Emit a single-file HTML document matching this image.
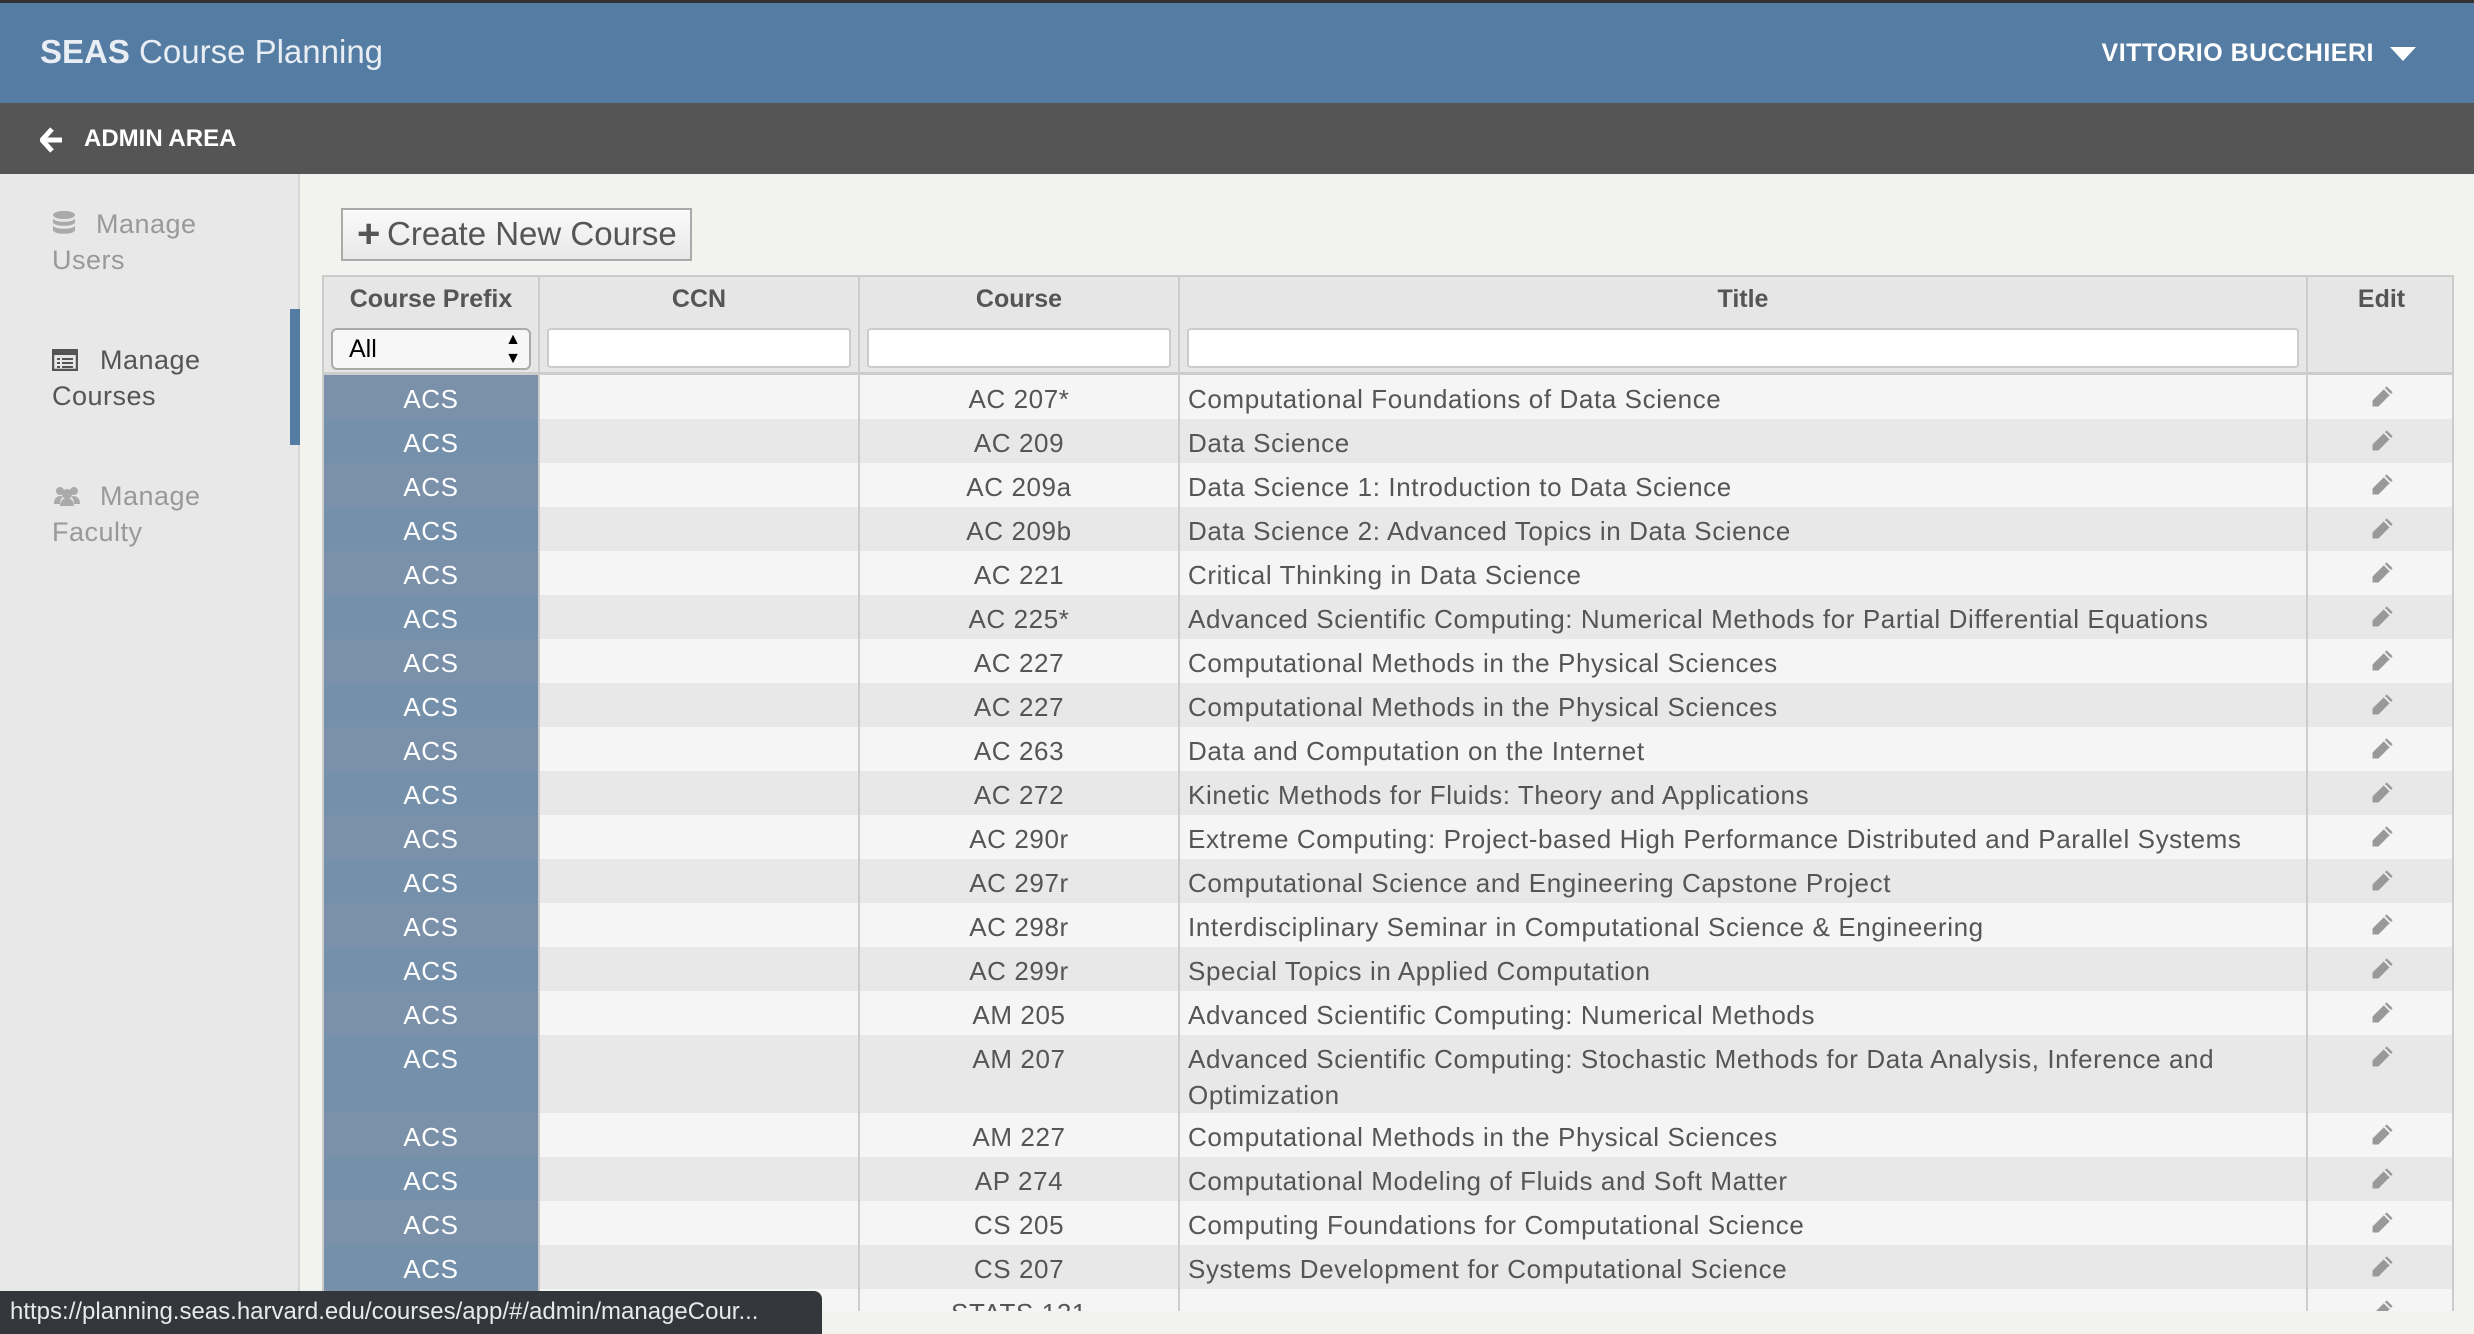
<!DOCTYPE html>
<html><head><meta charset="utf-8"><style>
*{box-sizing:border-box;margin:0;padding:0}
body{width:2474px;height:1334px;overflow:hidden;background:#f2f2ef;font-family:"Liberation Sans",sans-serif;position:relative}
.top{position:absolute;left:0;top:0;width:2474px;height:103px;background:#557ca3;border-top:3px solid #333}
.top .t{position:absolute;left:40px;top:30px;font-size:33px;color:#e8eef4}
.top .u{position:absolute;right:100px;top:36px;font-size:25px;color:#fff;font-weight:bold;letter-spacing:0.5px}
.caret{position:absolute;right:58px;top:44px;width:0;height:0;border-left:13px solid transparent;border-right:13px solid transparent;border-top:14px solid #fff}
.dark{position:absolute;left:0;top:103px;width:2474px;height:71px;background:#555}
.dark span{position:absolute;left:84px;top:22px;color:#fff;font-weight:bold;font-size:24px}
.side{position:absolute;left:0;top:174px;width:300px;height:1160px;background:#e8e8e8;border-right:2px solid #d6d6d6}
.si{position:absolute;left:52px;font-size:27px;line-height:36px;color:#999;letter-spacing:0.5px}
.si.a{color:#555}
.bar{position:absolute;left:290px;top:309px;width:10px;height:136px;background:#557ca3}
.btn{position:absolute;left:341px;top:208px;width:351px;height:53px;border:2px solid #aaa;background:linear-gradient(#fafafa,#e8e8e8);font-size:33px;color:#555;padding-left:44px;line-height:48px}
.btn b{position:absolute;left:14px;top:0;font-size:40px;color:#555}
.tw{position:absolute;left:322px;top:275px;width:2132px;height:1036px;overflow:hidden;border:2px solid #ccc;border-bottom:none}
table{border-collapse:collapse;table-layout:fixed;width:2132px}
th{background:#e6e6e6;height:96px;vertical-align:top;font-size:25px;color:#555;font-weight:bold;padding-top:8px;border-right:2px solid #ccc;border-bottom:3px solid #ccc}
th .in{margin:14px auto 0;width:calc(100% - 14px);height:40px;background:#fff;border:2px solid #ccc;border-radius:4px}
th .sel{margin:14px auto 0;width:calc(100% - 14px);height:42px;background:#f7f7f7;border:2px solid #aaa;border-radius:6px;text-align:left;padding-left:16px;font-weight:normal;color:#000;font-size:25px;line-height:38px;position:relative}
td{height:44px;font-size:26px;letter-spacing:0.6px;color:#555;border-right:2px solid #ccc;vertical-align:top;padding-top:6px;line-height:36px}
td:nth-child(1){background:#7a8fa8;color:#fff;text-align:center}
td:nth-child(3){text-align:center}
td:nth-child(4){padding-left:8px}
td:nth-child(5){text-align:center}
tr.d td{height:78px}
tr:nth-child(odd) td{background:#f5f5f5}
tr:nth-child(even) td{background:#e8e8e8}
tr:nth-child(odd) td:nth-child(1){background:#7b90a9}
tr:nth-child(even) td:nth-child(1){background:#7590aa}
.status{position:absolute;left:0;top:1291px;width:822px;height:43px;background:#33373b;border-radius:0 8px 0 0;color:#e8e8e8;font-size:24px;line-height:42px;padding-left:10px;white-space:nowrap}
</style></head><body>
<div class="top"><div class="t"><b>SEAS</b> Course Planning</div><div class="u">VITTORIO BUCCHIERI</div><div class="caret"></div></div>
<div class="dark"><svg style="position:absolute;left:40px;top:24px" width="24" height="26" viewBox="0 0 24 26"><path d="M12 2 L2 13 L12 24 M3 13 H22" stroke="#fff" stroke-width="5" fill="none" stroke-linejoin="round"/></svg><span>ADMIN AREA</span></div>
<div class="side">
<div class="si" style="top:32px"><svg width="24" height="26" viewBox="0 0 24 26" style="vertical-align:-3px;margin-right:20px"><ellipse cx="12" cy="5" rx="11" ry="4" fill="#aaa"/><path d="M1 8c0 5 22 5 22 0v4c0 5-22 5-22 0zM1 15c0 5 22 5 22 0v5c0 5-22 5-22 0z" fill="#aaa"/></svg>Manage<br>Users</div>
<div class="si a" style="top:168px"><svg width="26" height="22" viewBox="0 0 26 22" style="vertical-align:-2px;margin-right:22px"><rect x="1" y="1" width="24" height="20" fill="none" stroke="#555" stroke-width="2.5"/><rect x="1" y="1" width="24" height="5" fill="#555"/><path d="M5 10h3M10 10h11M5 14h3M10 14h11M5 18h3M10 18h11" stroke="#555" stroke-width="2"/></svg>Manage<br>Courses</div>
<div class="si" style="top:304px"><svg width="30" height="22" viewBox="0 0 30 22" style="vertical-align:-2px;margin-right:18px"><circle cx="8" cy="6" r="4" fill="#aaa"/><circle cx="22" cy="6" r="4" fill="#aaa"/><circle cx="15" cy="9" r="5" fill="#aaa"/><path d="M2 18c0-5 4-7 6-7s3 1 3 1c-3 2-3 5-3 7H2zM28 18c0-5-4-7-6-7s-3 1-3 1c3 2 3 5 3 7h6zM8 21c0-6 4-8 7-8s7 2 7 8z" fill="#aaa"/></svg>Manage<br>Faculty</div>
</div>
<div class="bar"></div>
<div class="btn"><b>+</b>Create New Course</div>
<div class="tw"><table>
<colgroup><col style="width:215px"><col style="width:320px"><col style="width:320px"><col style="width:1128px"><col style="width:149px"></colgroup>
<thead><tr><th>Course Prefix<div class="sel">All<span style="position:absolute;right:8px;top:0;font-size:16px;line-height:19px;color:#000">▲<br>▼</span></div></th><th>CCN<div class="in"></div></th><th>Course<div class="in"></div></th><th>Title<div class="in"></div></th><th>Edit</th></tr></thead>
<tbody id="b">
</tbody></table></div>
<div class="status">https://planning.seas.harvard.edu/courses/app/#/admin/manageCour...</div>
<script>
var r=[["AC 207*","Computational Foundations of Data Science"],["AC 209","Data Science"],["AC 209a","Data Science 1: Introduction to Data Science"],["AC 209b","Data Science 2: Advanced Topics in Data Science"],["AC 221","Critical Thinking in Data Science"],["AC 225*","Advanced Scientific Computing: Numerical Methods for Partial Differential Equations"],["AC 227","Computational Methods in the Physical Sciences"],["AC 227","Computational Methods in the Physical Sciences"],["AC 263","Data and Computation on the Internet"],["AC 272","Kinetic Methods for Fluids: Theory and Applications"],["AC 290r","Extreme Computing: Project-based High Performance Distributed and Parallel Systems"],["AC 297r","Computational Science and Engineering Capstone Project"],["AC 298r","Interdisciplinary Seminar in Computational Science &amp; Engineering"],["AC 299r","Special Topics in Applied Computation"],["AM 205","Advanced Scientific Computing: Numerical Methods"],["AM 207","Advanced Scientific Computing: Stochastic Methods for Data Analysis, Inference and<br>Optimization"],["AM 227","Computational Methods in the Physical Sciences"],["AP 274","Computational Modeling of Fluids and Soft Matter"],["CS 205","Computing Foundations for Computational Science"],["CS 207","Systems Development for Computational Science"],["STATS 121",""]];
var p='<svg width="26" height="26" viewBox="0 0 22 22" style="margin-top:3px"><path d="M15 2l5 5-12 12H3v-5z" fill="#999"/><path d="M13 4l5 5" stroke="#f5f5f5" stroke-width="1.5"/></svg>';
var h='';r.forEach(function(x){h+='<tr'+(x[0]=="AM 207"?' class="d"':'')+'><td>ACS</td><td></td><td>'+x[0]+'</td><td>'+x[1]+'</td><td>'+p+'</td></tr>'});
document.getElementById('b').innerHTML=h;
</script>
</body></html>
